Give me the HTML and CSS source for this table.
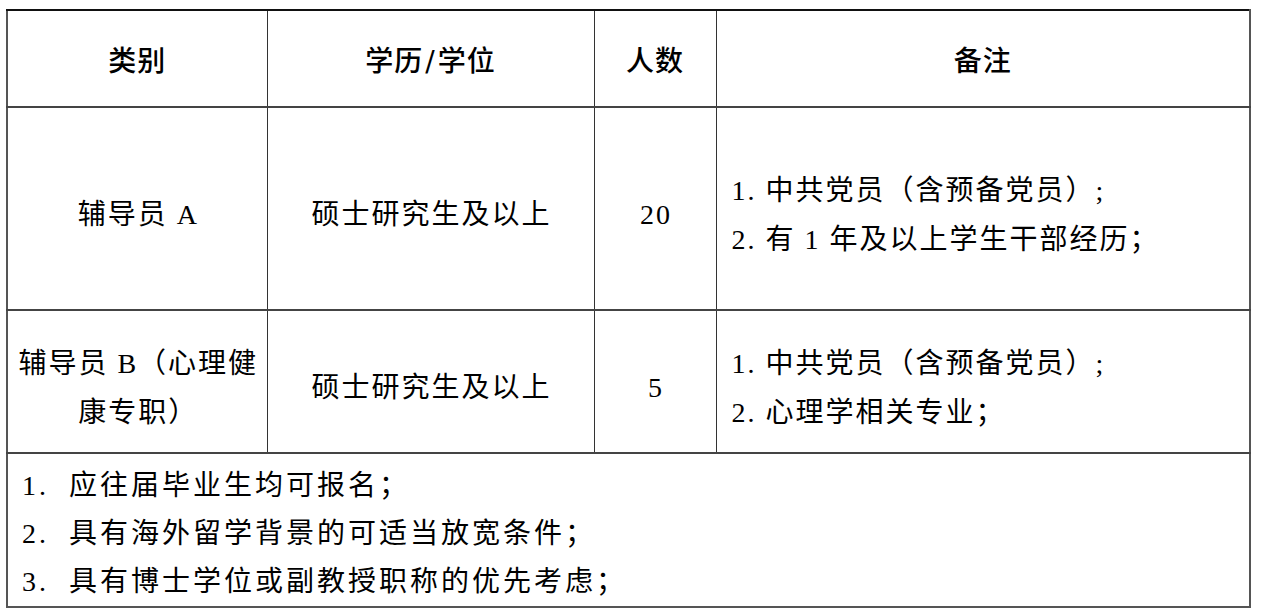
FILE: index.html
```html
<!DOCTYPE html>
<html lang="zh-CN">
<head>
<meta charset="utf-8">
<link rel="stylesheet" href="styles.css">
</head>
<body>
<table class="grid">
  <colgroup>
    <col class="c1"><col class="c2"><col class="c3"><col class="c4">
  </colgroup>
  <tr class="head">
    <th>类别</th>
    <th>学历<span class="slash">/</span>学位</th>
    <th>人数</th>
    <th>备注</th>
  </tr>
  <tr class="row-a">
    <td class="center">辅导员 A</td>
    <td class="center">硕士研究生及以上</td>
    <td class="center">20</td>
    <td class="notes">1. 中共党员（含预备党员）;<br>2. 有 1 年及以上学生干部经历；</td>
  </tr>
  <tr class="row-b">
    <td class="center">辅导员 B（心理健<br>康专职）</td>
    <td class="center">硕士研究生及以上</td>
    <td class="center">5</td>
    <td class="notes">1. 中共党员（含预备党员）;<br>2. 心理学相关专业；</td>
  </tr>
  <tr class="foot">
    <td colspan="4" class="footnotes">
      <div>1.&nbsp; 应往届毕业生均可报名；</div>
      <div>2.&nbsp; 具有海外留学背景的可适当放宽条件；</div>
      <div>3.&nbsp; 具有博士学位或副教授职称的优先考虑；</div>
    </td>
  </tr>
</table>
</body>
</html>
```

FILE: styles.css
```css
html, body {
  margin: 0;
  padding: 0;
  background: #ffffff;
}
body {
  padding: 9px 0 0 6px;
}
.grid {
  border-collapse: collapse;
  table-layout: fixed;
  width: 1243px;
  color: #000;
  font-family: "Liberation Serif", "Noto Sans CJK SC", serif;
}
.c1 { width: 260px; }
.c2 { width: 327px; }
.c3 { width: 122px; }
.c4 { width: 534px; }

.grid th, .grid td {
  border-left: 1px solid #333;
  border-right: 1px solid #333;
  border-top: 2px solid #444;
  border-bottom: 2px solid #444;
  padding: 0;
}
.grid tr.head th {
  border-top: 2px solid #111;
}
.grid th:first-child, .grid td:first-child {
  border-left: 2px solid #555;
}
.grid th:last-child, .grid td:last-child {
  border-right: 2px solid #555;
}
.head th {
  height: 95px;
  font-family: "Noto Sans CJK SC", sans-serif;
  font-weight: 500;
  font-size: 28px;
  letter-spacing: 1px;
  text-align: center;
  vertical-align: middle;
  color: #000;
}
.slash {
  font-family: "DejaVu Sans", sans-serif;
  font-weight: 400;
  padding: 0 2px;
}
.grid td {
  font-size: 28px;
  font-weight: 400;
  letter-spacing: 2px;
  line-height: 49px;
  vertical-align: middle;
  padding-top: 12px;
}
.row-a td { height: 189px; }
.row-b td { height: 129px; }
.center {
  text-align: center;
  padding-left: 2px !important;
}
.notes {
  padding-left: 15px !important;
  text-align: left;
}
.foot td {
  border-bottom: 2px solid #555;
  height: 142px;
}
.footnotes {
  padding: 8px 0 0 14px !important;
  vertical-align: top !important;
  line-height: 48px !important;
  letter-spacing: 3px !important;
}
```
